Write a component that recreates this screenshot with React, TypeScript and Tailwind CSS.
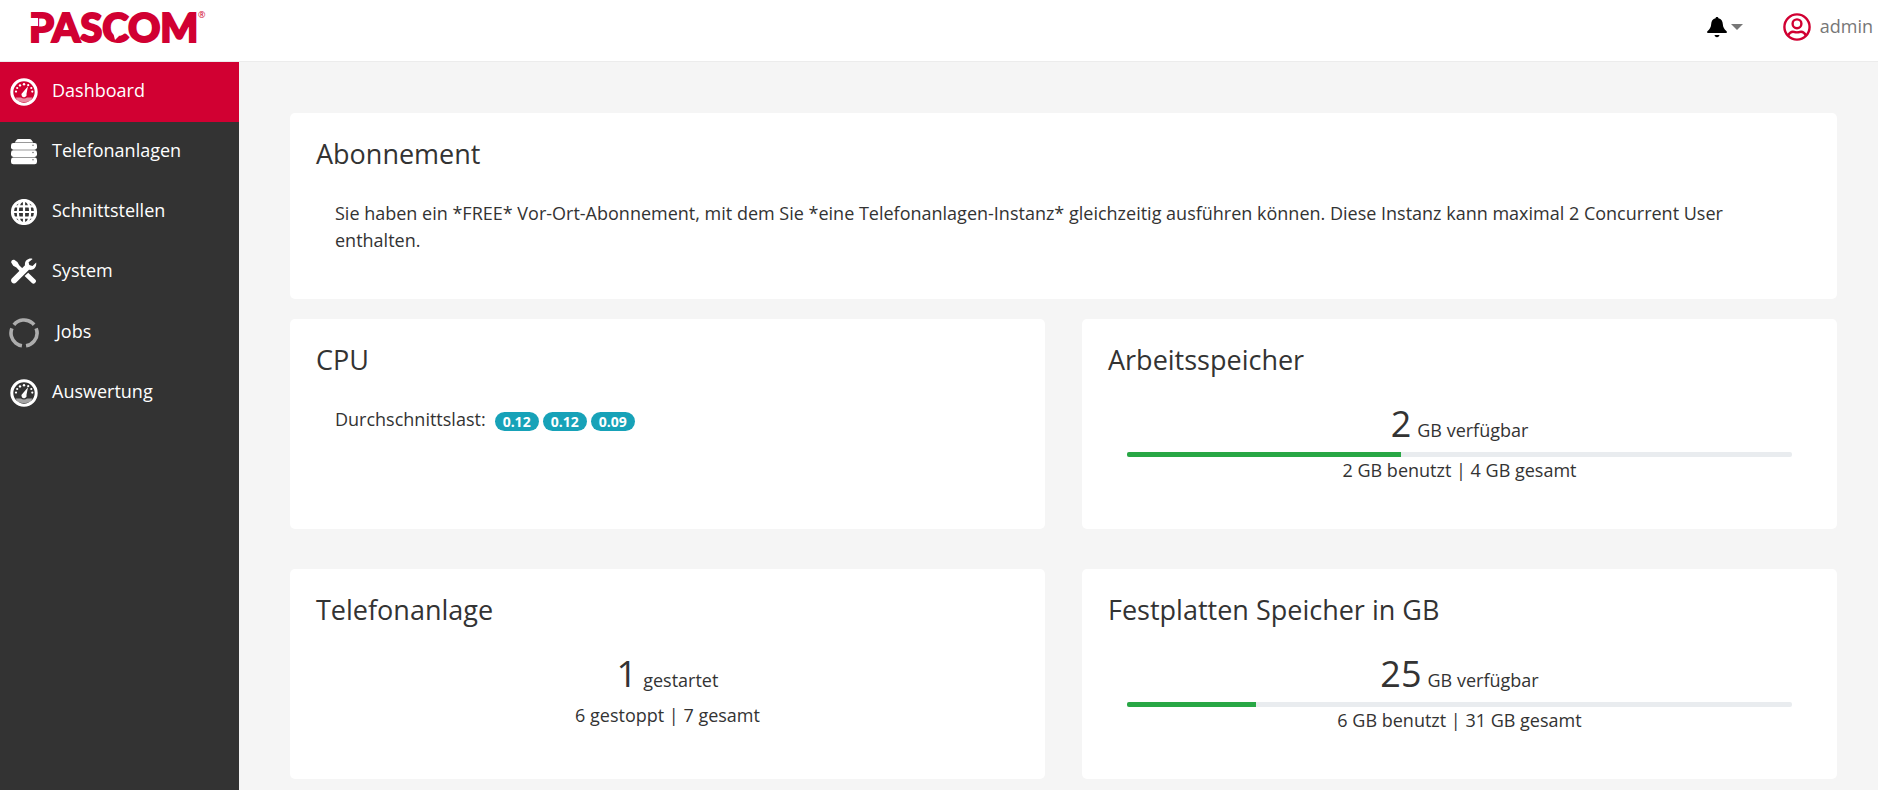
import React from "react";

type IconProps = { className?: string };

function GaugeIcon({ className }: IconProps) {
  return (
    <svg viewBox="0 0 28 28" className={className} aria-hidden="true">
      <circle cx="14" cy="14" r="12.2" fill="none" stroke="#fff" strokeWidth="3" />
      <g fill="#fff">
        <circle cx="6" cy="13.6" r="1.1" />
        <circle cx="7.2" cy="10" r="1.1" />
        <circle cx="10" cy="7.4" r="1.2" />
        <circle cx="14" cy="6.3" r="1.2" />
        <circle cx="18.2" cy="7.2" r="1.1" />
        <circle cx="21.3" cy="10" r="1.1" />
        <circle cx="22.3" cy="13.6" r="1.1" />
        <path d="M18 8.2 16.5 15.8A2.6 2.6 0 1 1 12.7 14.4Z" />
      </g>
      <path
        d="M5.5 19.6h5.500c1.500 1.200 4.500 1.200 6 0h5.500l-2 2.800c-4 2-9 2-13 0z"
        fill="#fff"
        fillOpacity=".55"
      />
    </svg>
  );
}

function ServerIcon({ className }: IconProps) {
  return (
    <svg viewBox="0 0 28 28" className={className} aria-hidden="true">
      <g fill="#fff">
        <path d="M6.500 2C7 1.300 7.700 1 8.500 1h11c.8 0 1.500.3 2 1l1.800 2.600H4.700z" />
        <rect x="1" y="5" width="26" height="6.700" rx="2.400" />
        <rect x="1" y="12.300" width="26" height="6.700" rx="2.400" />
        <rect x="1" y="19.600" width="26" height="6.700" rx="2.400" />
      </g>
      <g fill="#777">
        <circle cx="23" cy="7.200" r=".8" />
        <circle cx="23" cy="14.500" r=".8" />
        <circle cx="23" cy="21.800" r=".8" />
      </g>
    </svg>
  );
}

function GlobeIcon({ className }: IconProps) {
  return (
    <svg viewBox="0 0 28 28" className={className} aria-hidden="true">
      <g fill="none" stroke="#fff" strokeWidth="2.2">
        <circle cx="14" cy="14" r="11.600" strokeWidth="3" />
        <ellipse cx="14" cy="14" rx="6.200" ry="12" />
        <path d="M14 2v24M2 14h24M4 8.400h20M4 19.600h20" />
      </g>
    </svg>
  );
}

function ToolsIcon({ className }: IconProps) {
  return (
    <svg viewBox="0 0 28 28" className={className} aria-hidden="true">
      <g fill="#fff">
        <path d="M1.200 4.600C1 2.800 2.400 1.400 4.200 1.800L7.400 4 9.200 7.200 12.800 10.800 10 13.400 6.400 9.400 3.200 7.800Z" />
        <path d="M18.200 14.800 25.200 21.600c1.200 1.200 1 2.200 0 3.200-1.100 1.100-2.200 1.200-3.300.1L14.600 18z" />
        <path d="M22.600.9c-3.400-1.400-8.400 1.400-7.600 6.400L2 20.300c-1.300 1.300-1.200 3.200-.1 4.300 1.200 1.200 3 1.200 4.300 0L19 11.800c4.700.7 7.800-3 7.200-7.200l-3.700 3.300-3.200-1-.7-2.700z" />
      </g>
    </svg>
  );
}

function JobsIcon({ className }: IconProps) {
  return (
    <svg viewBox="0 0 30 30" className={className} aria-hidden="true">
      <circle
        cx="15"
        cy="15"
        r="13"
        pathLength={360}
        fill="none"
        stroke="#adadad"
        strokeWidth="3.600"
        strokeDasharray="102 18"
        transform="rotate(-141 15 15)"
      />
    </svg>
  );
}

function BellIcon({ className }: IconProps) {
  return (
    <svg viewBox="0 0 20 21" className={className} aria-hidden="true">
      <path d="M8.600 1.200C8.600.4 9.200 0 10 0s1.400.4 1.400 1.200c3 .7 4.200 2.800 4.400 5.800.2 3.400 1.400 5.200 3.800 7.200.5.500.4 1.800-.4 1.800H.8c-.8 0-.9-1.300-.4-1.800 2.400-2 3.600-3.800 3.800-7.200.2-3 1.400-5.100 4.400-5.800zM7.600 18h4.800C12.400 19.400 11.400 20.200 10 20.200s-2.400-.8-2.400-2.200z" />
    </svg>
  );
}

function UserIcon({ className }: IconProps) {
  return (
    <svg viewBox="0 0 28 28" className={className} fill="none" stroke="#d10032" strokeWidth="2.400" aria-hidden="true">
      <circle cx="14" cy="14" r="12.600" />
      <circle cx="14" cy="10.800" r="4.400" />
      <path d="M5 22.600c1.500-3 4-4.400 6.500-3.600 1.700.5 3.300.5 5 0 2.500-.8 5 .6 6.500 3.600" />
    </svg>
  );
}

function Logo() {
  return (
    <a href="#" className="block">
      <svg viewBox="0 0 192 52" className="h-[52px] w-48">
        <text x="7" y="42" fill="#d10032" stroke="#d10032" strokeWidth="2" className="font-['Lato',sans-serif] text-[40px] font-black">
          PASCOM
        </text>
        <path d="M8 18h8v8H8zM91 32l6 4-4 4z" fill="#fff" />
        <text x="176" y="18" fill="#d10032" className="font-['Open_Sans',sans-serif] text-[9px]">®</text>
      </svg>
    </a>
  );
}

const navItems = [
  { label: "Dashboard", Icon: GaugeIcon, active: true },
  { label: "Telefonanlagen", Icon: ServerIcon },
  { label: "Schnittstellen", Icon: GlobeIcon },
  { label: "System", Icon: ToolsIcon },
  { label: "Jobs", Icon: JobsIcon, wide: true },
  { label: "Auswertung", Icon: GaugeIcon },
];

function Card({ title, className = "", children }: { title: string; className?: string; children: React.ReactNode }) {
  return (
    <section className={`rounded-[5px] bg-white px-[26px] pt-[25px] ${className}`}>
      <h2 className="text-[27px] leading-8">{title}</h2>
      <div className="px-[19px] pt-[30px]">{children}</div>
    </section>
  );
}

function Figure({ value, unit }: { value: string; unit: string }) {
  return (
    <p className="mb-2 flex items-baseline justify-center gap-[6px]">
      <span className="text-4xl leading-[35px]">{value}</span>
      <span>{unit}</span>
    </p>
  );
}

function Meter({ label, percent }: { label: string; percent: number }) {
  return (
    <div
      role="progressbar"
      aria-label={label}
      aria-valuenow={percent}
      className="h-[5px] overflow-hidden rounded-[2px] bg-[#e9ecef]"
    >
      <div className="h-full bg-[#28a745]" style={{ width: `${percent}%` }} />
    </div>
  );
}

export default function App() {
  return (
    <div className="flex min-h-screen flex-col bg-[#f5f5f5] font-['Open_Sans',sans-serif] text-lg leading-[27px] text-[#333]">
      <header className="flex h-[62px] items-start justify-between border-b border-[#ececec] bg-white pr-[5px] pl-[22px]">
        <Logo />
        <div className="flex h-[53px] items-center">
          <button type="button" aria-label="Benachrichtigungen" className="flex items-center gap-1">
            <BellIcon className="mt-0.5 h-[21px] w-5" />
            <svg viewBox="0 0 12 6" className="h-[6px] w-3" aria-hidden="true">
              <path d="M0 0h12L6 6z" fill="#777" />
            </svg>
          </button>
          <button type="button" className="ml-10 flex items-center gap-[9px] text-[#777]">
            <UserIcon className="size-7" />
            admin
          </button>
        </div>
      </header>
      <div className="flex flex-1">
        <nav className="w-[239px] shrink-0 bg-[#333]">
          {navItems.map(({ label, Icon, active, wide }) => (
            <a
              key={label}
              href="#"
              className={`flex items-center text-white ${active ? "bg-[#d10032]" : ""} ${wide ? "h-[61px] gap-[17px] pl-[9px]" : "h-[60px] gap-[14px] pl-[10px]"}`}
            >
              <Icon className={wide ? "size-[30px]" : "size-7"} />
              <span className={wide ? "pb-0.5" : "pb-1"}>{label}</span>
            </a>
          ))}
        </nav>
        <main className="flex-1 pt-[51px] pr-[41px] pb-3 pl-[51px]">
          <Card title="Abonnement" className="min-h-[186px]">
            <p>
              Sie haben ein *FREE* Vor-Ort-Abonnement, mit dem Sie *eine Telefonanlagen-Instanz* gleichzeitig ausführen
              können. Diese Instanz kann maximal 2 Concurrent User enthalten.
            </p>
          </Card>
          <div className="mt-5 grid grid-cols-2 gap-x-[37px] gap-y-10">
            <Card title="CPU" className="min-h-[210px]">
              <p className="flex items-center gap-1">
                <span className="mr-[5px]">Durchschnittslast:</span>
                {["0.12", "0.12", "0.09"].map((load, i) => (
                  <span key={i} className="mt-1 rounded-full bg-[#17a2b8] px-2 text-sm leading-[19px] font-bold text-white">
                    {load}
                  </span>
                ))}
              </p>
            </Card>
            <Card title="Arbeitsspeicher" className="min-h-[210px]">
              <Figure value="2" unit="GB verfügbar" />
              <Meter label="Arbeitsspeicher" percent={41.2} />
              <p className="text-center">2 GB benutzt | 4 GB gesamt</p>
            </Card>
            <Card title="Telefonanlage" className="min-h-[210px]">
              <Figure value="1" unit="gestartet" />
              <p className="text-center">6 gestoppt | 7 gesamt</p>
            </Card>
            <Card title="Festplatten Speicher in GB" className="min-h-[210px]">
              <Figure value="25" unit="GB verfügbar" />
              <Meter label="Festplatten Speicher" percent={19.4} />
              <p className="text-center">6 GB benutzt | 31 GB gesamt</p>
            </Card>
          </div>
        </main>
      </div>
    </div>
  );
}
